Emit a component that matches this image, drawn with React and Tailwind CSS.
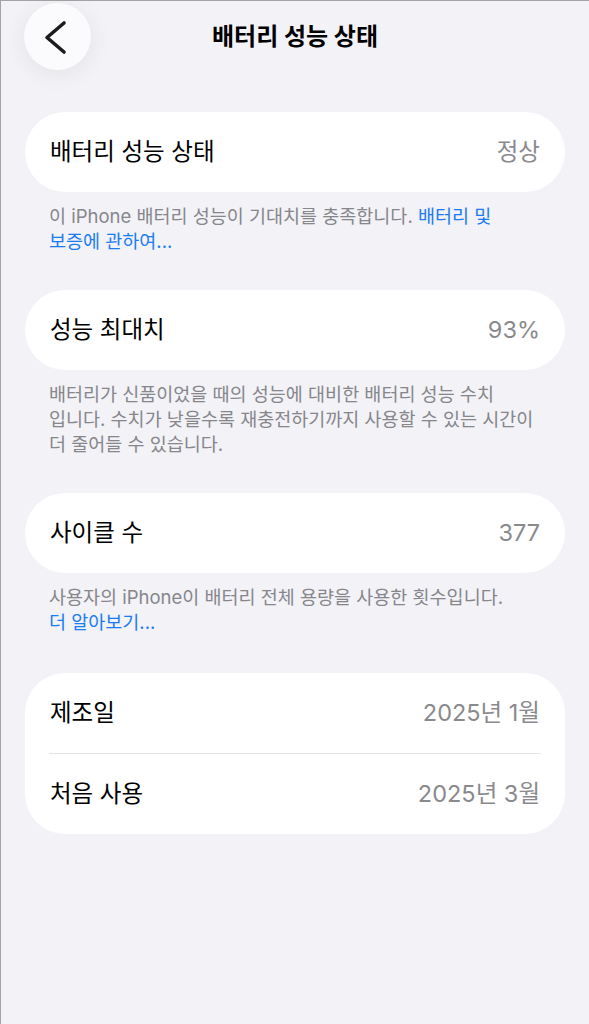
const font = { fontFamily: 'Inter, "Noto Sans CJK KR", sans-serif' };

function Row({ label, value }) {
  return (
    <div className="flex h-[80px] items-center justify-between px-[25px]">
      <span className="text-[23.5px] text-black">{label}</span>
      <span className="text-[23.5px] text-[#8a8a8e]">{value}</span>
    </div>
  );
}

function Note({ children }) {
  return (
    <p className="mt-[12px] mb-[36px] px-[24px] text-[18.5px] leading-[25px] text-[#86868b]">{children}</p>
  );
}

export default function App() {
  return (
    <div className="min-h-screen border-t border-l border-[#a3a3a3] bg-[#f2f2f7]" style={font}>
      <header className="mt-[2px] grid h-[67px] grid-cols-[1fr_auto_1fr] items-center">
        <div className="pl-[23px]">
          <button className="flex h-[67px] w-[67px] items-center justify-center rounded-full bg-[#fbfbfd] shadow-[0_4px_24px_rgba(0,0,0,0.07)]">
            <svg width="67" height="67" viewBox="0 0 67 67" fill="none">
              <polyline points="40,20 23,34.5 40,49" stroke="#1c1c1e" strokeWidth="3.6" strokeLinecap="round" strokeLinejoin="round" />
            </svg>
          </button>
        </div>
        <h1 className="text-[24px] font-bold text-black">배터리 성능 상태</h1>
        <div />
      </header>

      <main className="mt-[42px] flex flex-col px-[24px]">
        <div className="rounded-[40px] bg-white">
          <Row label="배터리 성능 상태" value="정상" />
        </div>
        <Note>
          이 iPhone 배터리 성능이 기대치를 충족합니다. <span className="text-[#1a7cf5]">배터리 및<br />보증에 관하여...</span>
        </Note>

        <div className="rounded-[40px] bg-white">
          <Row label="성능 최대치" value="93%" />
        </div>
        <Note>
          배터리가 신품이었을 때의 성능에 대비한 배터리 성능 수치<br />
          입니다. 수치가 낮을수록 재충전하기까지 사용할 수 있는 시간이<br />
          더 줄어들 수 있습니다.
        </Note>

        <div className="rounded-[40px] bg-white">
          <Row label="사이클 수" value="377" />
        </div>
        <Note>
          사용자의 iPhone이 배터리 전체 용량을 사용한 횟수입니다.<br />
          <span className="text-[#1a7cf5]">더 알아보기...</span>
        </Note>

        <div className="mt-[2px] rounded-[40px] bg-white">
          <Row label="제조일" value="2025년 1월" />
          <div className="mx-[24px] h-px bg-[#e3e3e8]" />
          <Row label="처음 사용" value="2025년 3월" />
        </div>
      </main>
    </div>
  );
}
